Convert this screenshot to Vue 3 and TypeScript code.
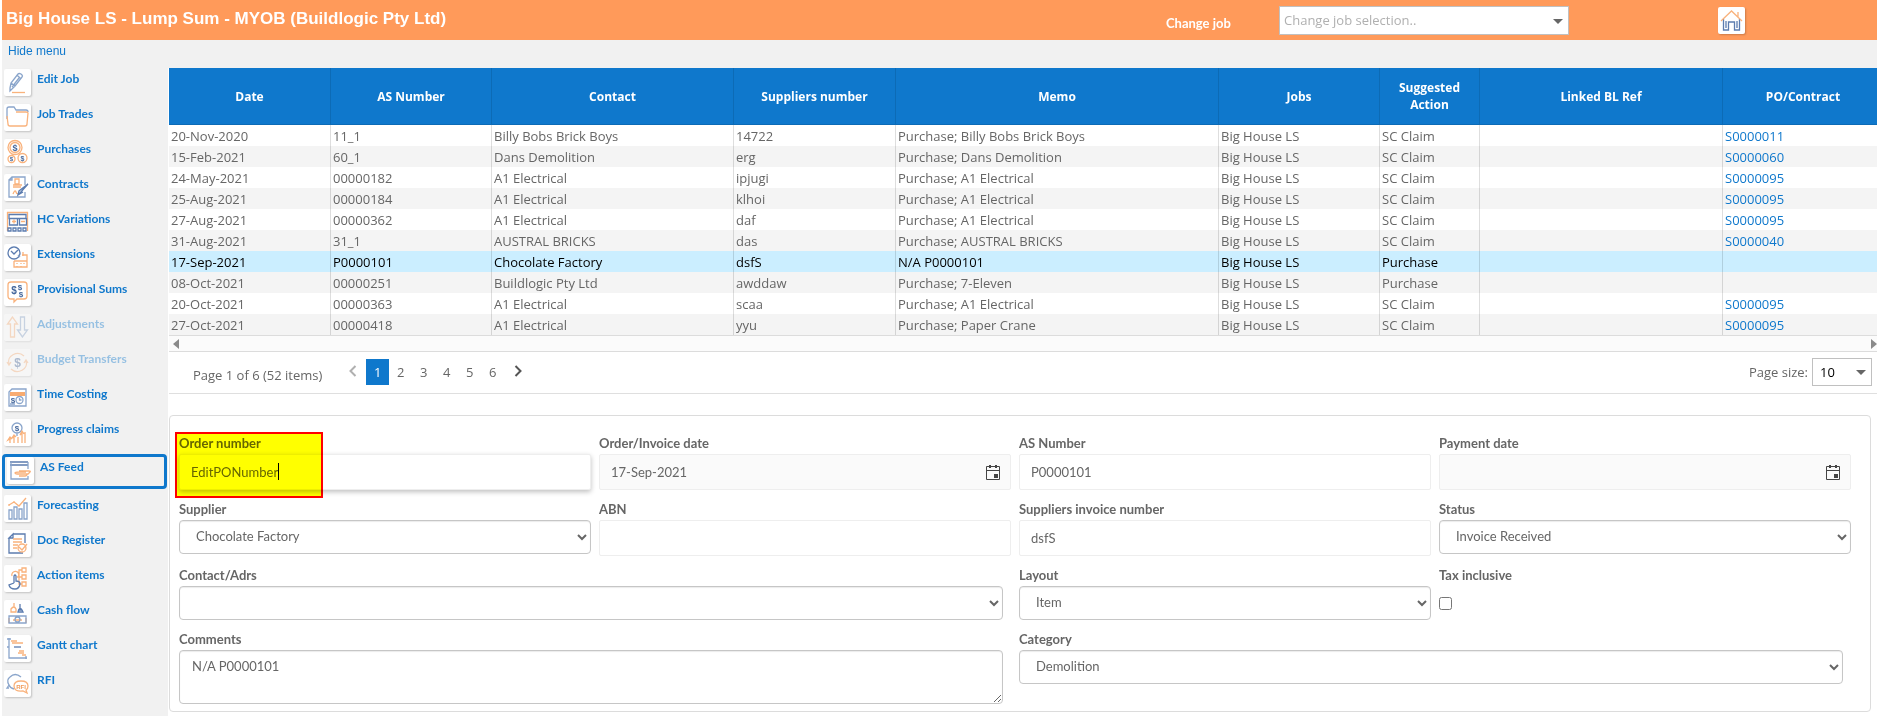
<script setup lang="ts">
import { ref } from 'vue'

type Shape = { t: 'b' | 'o' | 'd' | 'fb' | 'fo'; d: string }
type Glyph = { x: number; y: number; s: number; t: 'fb' | 'fo'; v: string }
interface MenuItem {
  label: string
  state?: 'active' | 'disabled'
  shapes: Shape[]
  glyphs?: Glyph[]
}

const menu: MenuItem[] = [
  {
    label: 'Edit Job',
    shapes: [
      { t: 'b', d: 'M6 19l1-5 7-9q1-1 3 0l1 1q1 1 0 2l-7 9-5 5zM7 14l4 3M13 6l4 4M8 18l7-9' },
      { t: 'o', d: 'M8 23.500h13' },
    ],
  },
  {
    label: 'Job Trades',
    shapes: [
      { t: 'b', d: 'M3 15V5q0-2 2-2h5l2 3h10q2 0 2 2' },
      { t: 'o', d: 'M3 12l1 8q0 2 2 2h15q2 0 2-2l1-11q0-1-2-1H12' },
    ],
  },
  {
    label: 'Purchases',
    shapes: [
      { t: 'o', d: 'M4 8.500a7 7 0 1 0 14 0a7 7 0 1 0-14 0M6 8.500a5 5 0 1 0 10 0a5 5 0 1 0-10 0M4 20a3.500 3.500 0 1 0 7 0a3.500 3.500 0 1 0-7 0M14 19a4.500 4.500 0 1 0 9 0a4.500 4.500 0 1 0-9 0' },
    ],
    glyphs: [
      { x: 11, y: 12, s: 9, t: 'fb', v: '$' },
      { x: 7.5, y: 22, s: 6, t: 'fb', v: '$' },
      { x: 18.5, y: 22, s: 7, t: 'fb', v: '$' },
    ],
  },
  {
    label: 'Contracts',
    shapes: [
      { t: 'b', d: 'M5 6l3-3h13v8M21 18v5H5V6h3V3' },
      { t: 'o', d: 'M11 5h4v5h-4zM9 11h9M9 13h8M9 20q2-5 3-2t3 1' },
      { t: 'd', d: 'M24 10l-8 9-2 2 1-4zM14 21l5-3' },
    ],
  },
  {
    label: 'HC Variations',
    shapes: [
      { t: 'o', d: 'M3.500 3v19M23.500 3v19M3 3.500h21M8 12.500h4M10 10.500v4M17 12.500h4' },
      { t: 'd', d: 'M5 5.500h17v4H5zM5.500 9v7h8V9M15.500 9v7h7V9M4 19h3v3H4zM9 19h3v3H9zM14 19h3v3h-3zM19 19h3v3h-3z' },
    ],
  },
  {
    label: 'Extensions',
    shapes: [
      { t: 'd', d: 'M4 9a6 6 0 1 0 12 0a6 6 0 1 0-12 0M7 7l3 3 4-4' },
      { t: 'b', d: 'M10 3v1M16 13l-2-2' },
      { t: 'o', d: 'M10 17v6h13V11h-5M10 17h13M13 19v1M17 19v1M20 19v1M13 22v1M17 22v1M19 8v4' },
    ],
  },
  {
    label: 'Provisional Sums',
    shapes: [{ t: 'o', d: 'M7 3h13q3 0 3 3v11q0 3-3 3h-7l-3 3v-3H7q-3 0-3-3V6q0-3 3-3z' }],
    glyphs: [
      { x: 10, y: 15, s: 10, t: 'fb', v: '$' },
      { x: 16, y: 11, s: 8, t: 'fb', v: '$' },
      { x: 17, y: 18, s: 8, t: 'fb', v: '$' },
    ],
  },
  {
    label: 'Adjustments',
    state: 'disabled',
    shapes: [
      { t: 'o', d: 'M8.500 3l-5 7h3v13h4V10h3z' },
      { t: 'b', d: 'M18.500 23l-5-7h3V3h4v13h3z' },
    ],
  },
  {
    label: 'Budget Transfers',
    state: 'disabled',
    shapes: [
      { t: 'o', d: 'M5 15a9 8 0 0 1 15-8M22 12a9 8 0 0 1-15 8M3 13l2 3 2-3M20 14l2-3 2 3' },
    ],
    glyphs: [{ x: 13.5, y: 18, s: 12, t: 'fb', v: '$' }],
  },
  {
    label: 'Time Costing',
    shapes: [
      { t: 'b', d: 'M5 8l3-3h14v17H5zM12 16a3.500 3.500 0 1 0 7 0a3.500 3.500 0 1 0-7 0M15.500 14v2h2M6 20h5' },
      { t: 'fo', d: 'M6 8h15v4H6z' },
    ],
    glyphs: [{ x: 9, y: 19, s: 8, t: 'fb', v: '$' }],
  },
  {
    label: 'Progress claims',
    shapes: [
      { t: 'b', d: 'M8 9a5 5 0 1 0 10 0a5 5 0 1 0-10 0M13 14v3' },
      { t: 'o', d: 'M6 24v-4l-2 1 2-3 2 2M10 24v-6l-2 1 2-3 2 2M14 24v-6M18 24V14l-2 2 2-4 2 3M21 24V13' },
    ],
    glyphs: [{ x: 13, y: 12, s: 8, t: 'fb', v: '$' }],
  },
  {
    label: 'AS Feed',
    state: 'active',
    shapes: [
      { t: 'd', d: 'M3 5h18M3 8h18' },
      { t: 'b', d: 'M4 5v17h17v-3M21 5v7' },
      { t: 'o', d: 'M12 14h10q2 0 1 1l-2 2h-9q-4 0-4-1t4-1h7M12 19h6q2 0 2-2' },
    ],
  },
  {
    label: 'Forecasting',
    shapes: [
      { t: 'b', d: 'M5 15h3v9H5zM10 12h3v12h-3zM15 14h3v10h-3zM20 8h3v16h-3z' },
      { t: 'o', d: 'M5 10l5-3 5 4 7-8M5 9v2M10 6v2M15 10v2' },
    ],
  },
  {
    label: 'Doc Register',
    shapes: [
      { t: 'd', d: 'M5 8l4-4v4zM9 4h12v9M5 8v15h14' },
      { t: 'o', d: 'M9 9h9M9 12h9M9 15h5M9 18h4M14 18a4 4 0 1 0 8 0a4 4 0 1 0-8 0M15 17l3 3 5-6' },
    ],
  },
  {
    label: 'Action items',
    shapes: [
      { t: 'o', d: 'M18 3h4v4h-4zM18 10h4v4h-4zM18 17h4v4h-4zM18 5h-3v14h3M13 12h5M8 11a3.500 3.500 0 1 1 6 1' },
      { t: 'd', d: 'M10 18v-7q1-2 2 0v5q4 0 4 3-1 5-5 5-5 0-6-4l5-2' },
    ],
  },
  {
    label: 'Cash flow',
    shapes: [
      { t: 'o', d: 'M10 3v4M7 9q3-4 5 0v3H7zM5 18v5M22 18v5M9 20h9' },
      { t: 'd', d: 'M16 4v4M14 12q2-7 5 0zM14 10h4' },
      { t: 'b', d: 'M5 16h17v7H5zM11 19.500a2.500 2.500 0 1 0 5 0a2.500 2.500 0 1 0-5 0' },
    ],
  },
  {
    label: 'Gantt chart',
    shapes: [
      { t: 'b', d: 'M5 3v20h18M3 4h4M3 12h2M22 21v3' },
      { t: 'o', d: 'M7 6h6M8 8h11M15 16h5M14 18h6M18 20h4' },
      { t: 'd', d: 'M10 12h7' },
    ],
  },
  {
    label: 'RFI',
    shapes: [
      { t: 'b', d: 'M5 18H3l2-3q-3-5 1-8 5-5 11 0M5 15q1 3 5 4' },
      { t: 'o', d: 'M10 16q0-5 7-5t7 5q0 3-2 4l1 3-4-2q-9 1-9-5z' },
    ],
    glyphs: [{ x: 17, y: 19, s: 6, t: 'fo', v: 'RFI' }],
  },
]

const columns = [
  { name: 'Date', cls: 'c162' },
  { name: 'AS Number', cls: 'c161' },
  { name: 'Contact', cls: 'c242' },
  { name: 'Suppliers number', cls: 'c162' },
  { name: 'Memo', cls: 'c323' },
  { name: 'Jobs', cls: 'c161' },
  { name: 'Suggested Action', cls: 'c100' },
  { name: 'Linked BL Ref', cls: 'c243' },
  { name: 'PO/Contract', cls: 'c161' },
]

const rows: string[][] = [
  ['20-Nov-2020', '11_1', 'Billy Bobs Brick Boys', '14722', 'Purchase; Billy Bobs Brick Boys', 'Big House LS', 'SC Claim', '', 'S0000011'],
  ['15-Feb-2021', '60_1', 'Dans Demolition', 'erg', 'Purchase; Dans Demolition', 'Big House LS', 'SC Claim', '', 'S0000060'],
  ['24-May-2021', '00000182', 'A1 Electrical', 'ipjugi', 'Purchase; A1 Electrical', 'Big House LS', 'SC Claim', '', 'S0000095'],
  ['25-Aug-2021', '00000184', 'A1 Electrical', 'klhoi', 'Purchase; A1 Electrical', 'Big House LS', 'SC Claim', '', 'S0000095'],
  ['27-Aug-2021', '00000362', 'A1 Electrical', 'daf', 'Purchase; A1 Electrical', 'Big House LS', 'SC Claim', '', 'S0000095'],
  ['31-Aug-2021', '31_1', 'AUSTRAL BRICKS', 'das', 'Purchase; AUSTRAL BRICKS', 'Big House LS', 'SC Claim', '', 'S0000040'],
  ['17-Sep-2021', 'P0000101', 'Chocolate Factory', 'dsfS', 'N/A P0000101', 'Big House LS', 'Purchase', '', ''],
  ['08-Oct-2021', '00000251', 'Buildlogic Pty Ltd', 'awddaw', 'Purchase; 7-Eleven', 'Big House LS', 'Purchase', '', ''],
  ['20-Oct-2021', '00000363', 'A1 Electrical', 'scaa', 'Purchase; A1 Electrical', 'Big House LS', 'SC Claim', '', 'S0000095'],
  ['27-Oct-2021', '00000418', 'A1 Electrical', 'yyu', 'Purchase; Paper Crane', 'Big House LS', 'SC Claim', '', 'S0000095'],
]

const selected = ref(6)
const page = ref(1)
const orderNumber = ref('EditPONumber')
const orderDate = ref('17-Sep-2021')
const asNumber = ref('P0000101')
const paymentDate = ref('')
const abn = ref('')
const invoiceNumber = ref('dsfS')
const comments = ref('N/A P0000101')
const taxInclusive = ref(false)
</script>

<template>
  <div class="page">
    <header class="topbar">
      <h1>Big House LS - Lump Sum - MYOB (Buildlogic Pty Ltd)</h1>
      <label class="change" for="job">Change job</label>
      <div class="combo">
        <input id="job" type="text" placeholder="Change job selection.." />
        <button type="button" aria-label="Open job list"><span class="tri-down"></span></button>
      </div>
      <a class="home" href="#" aria-label="Home">
        <svg viewBox="0 0 27 27" class="ico">
          <path class="d" d="M5.500 12v11h5v-8h6v8h5V12M8 14v7M19 14v7" />
          <path class="o" d="M3 14L13.500 4 24 14M20 5v5" />
        </svg>
      </a>
    </header>

    <div class="body">
      <nav class="side">
        <a class="hide" href="#">Hide menu</a>
        <a v-for="m in menu" :key="m.label" href="#" class="item" :class="m.state">
          <span class="card">
            <svg viewBox="0 0 27 27" class="ico">
              <path v-for="(s, i) in m.shapes" :key="i" :class="s.t" :d="s.d" />
              <text v-for="(g, i) in m.glyphs" :key="'g' + i" :class="g.t" :x="g.x" :y="g.y" :font-size="g.s">{{ g.v }}</text>
            </svg>
          </span>
          <span class="name">{{ m.label }}</span>
        </a>
      </nav>

      <main class="main">
        <section class="grid">
          <div class="scroll">
            <table>
              <colgroup>
                <col v-for="c in columns" :key="c.name" :class="c.cls" />
              </colgroup>
              <thead>
                <tr>
                  <th v-for="c in columns" :key="c.name" scope="col">{{ c.name }}</th>
                </tr>
              </thead>
              <tbody>
                <tr v-for="(r, i) in rows" :key="i" :class="{ alt: i % 2 === 1, sel: i === selected }" @click="selected = i">
                  <td v-for="(v, j) in r" :key="j">
                    <a v-if="j === 8 && v" href="#">{{ v }}</a>
                    <template v-else>{{ v }}</template>
                  </td>
                </tr>
              </tbody>
            </table>
          </div>
          <div class="hbar">
            <button type="button" aria-label="Scroll left"><span class="tri-left"></span></button>
            <button type="button" aria-label="Scroll right"><span class="tri-right"></span></button>
          </div>
          <div class="pager">
            <span class="summary">Page 1 of 6 (52 items)</span>
            <div class="pages">
              <button type="button" class="arrow dim" aria-label="Previous page">
                <svg width="8" height="12" viewBox="0 0 8 12"><path d="M6.500 1l-5 5 5 5" /></svg>
              </button>
              <button v-for="n in 6" :key="n" type="button" :class="{ on: n === page }" @click="page = n">{{ n }}</button>
              <button type="button" class="arrow" aria-label="Next page">
                <svg width="8" height="12" viewBox="0 0 8 12"><path d="M1.500 1l5 5-5 5" /></svg>
              </button>
            </div>
            <label for="size">Page size:</label>
            <div class="size">
              <select id="size"><option>10</option></select>
              <span class="tri-down"></span>
            </div>
          </div>
        </section>

        <form class="form" @submit.prevent>
          <div class="field">
            <label for="on">Order number</label>
            <input id="on" v-model="orderNumber" type="text" class="focus" />
            <span class="caret"></span>
            <span class="mark"></span>
          </div>
          <div class="field">
            <label for="od">Order/Invoice date</label>
            <div class="date">
              <input id="od" v-model="orderDate" type="text" />
              <button type="button" aria-label="Pick order date">
                <svg width="16" height="17" viewBox="0 0 16 17"><path class="ln" d="M1.500 2.500h13v13h-13zM1 6.500h14" /><path d="M4 1h2v3H4zM10 1h2v3h-2zM9 10h4v4H9z" /></svg>
              </button>
            </div>
          </div>
          <div class="field">
            <label for="an">AS Number</label>
            <input id="an" v-model="asNumber" type="text" />
          </div>
          <div class="field">
            <label for="pd">Payment date</label>
            <div class="date">
              <input id="pd" v-model="paymentDate" type="text" />
              <button type="button" aria-label="Pick payment date">
                <svg width="16" height="17" viewBox="0 0 16 17"><path class="ln" d="M1.500 2.500h13v13h-13zM1 6.500h14" /><path d="M4 1h2v3H4zM10 1h2v3h-2zM9 10h4v4H9z" /></svg>
              </button>
            </div>
          </div>

          <div class="field">
            <label for="su">Supplier</label>
            <select id="su"><option>Chocolate Factory</option></select>
          </div>
          <div class="field">
            <label for="ab">ABN</label>
            <input id="ab" v-model="abn" type="text" />
          </div>
          <div class="field">
            <label for="si">Suppliers invoice number</label>
            <input id="si" v-model="invoiceNumber" type="text" />
          </div>
          <div class="field">
            <label for="st">Status</label>
            <select id="st"><option>Invoice Received</option></select>
          </div>

          <div class="field wide">
            <label for="ca">Contact/Adrs</label>
            <select id="ca"><option></option></select>
          </div>
          <div class="field">
            <label for="la">Layout</label>
            <select id="la"><option>Item</option></select>
          </div>
          <div class="field">
            <label for="ti">Tax inclusive</label>
            <input id="ti" v-model="taxInclusive" type="checkbox" />
          </div>

          <div class="field wide">
            <label for="co">Comments</label>
            <textarea id="co" v-model="comments"></textarea>
          </div>
          <div class="field wide">
            <label for="cg">Category</label>
            <select id="cg"><option>Demolition</option></select>
          </div>
        </form>
      </main>
    </div>
  </div>
</template>

<style>
body {
  margin: 0;
  background: #fff;
}
</style>

<style scoped>
* {
  box-sizing: border-box;
}
a {
  text-decoration: none;
}
button {
  border: 0;
  padding: 0;
  background: none;
  font: inherit;
  color: inherit;
  cursor: pointer;
}
.page {
  display: flex;
  flex-direction: column;
  min-height: 100vh;
  padding-left: 2px;
  overflow: hidden;
  font-family: 'Open Sans', 'Noto Sans', sans-serif;
  font-size: 13px;
  color: #666;
}
.topbar {
  display: grid;
  grid-template-columns: 1164fr 113fr 439fr 159fr;
  align-items: center;
  height: 40px;
  background: #ff9a5a;
  color: #fff;
}
h1 {
  margin: 0 0 3px 4px;
  font: bold 17px/20px 'Liberation Sans', Arial, sans-serif;
}
.change {
  padding-top: 6px;
  font: bold 13px/18px Lato, Calibri, sans-serif;
}
.combo {
  display: flex;
  width: 66%;
  height: 29px;
  border: 1px solid #c0c0c0;
  background: #fff;
}
.combo input {
  flex: 1;
  min-width: 0;
  padding: 0 4px;
  border: 0;
  outline: 0;
  font: 13px 'Open Sans', 'Noto Sans', sans-serif;
}
.combo input::placeholder {
  color: #b0b0b0;
}
.combo button {
  width: 20px;
}
.tri-down {
  display: inline-block;
  border: 5px solid transparent;
  border-top-color: #666;
  border-bottom: 0;
  vertical-align: middle;
}
.home,
.card {
  flex: none;
  display: block;
  width: 27px;
  height: 27px;
  border-radius: 2px;
  background: #fff;
  box-shadow: 1px 1px 2px rgba(0, 0, 0, 0.2);
}
.ico {
  display: block;
  width: 27px;
  height: 27px;
}
.ico path {
  fill: none;
  stroke-width: 1.3;
}
.ico .b {
  stroke: #8aa5cb;
}
.ico .d {
  stroke: #5c7caf;
}
.ico .o {
  stroke: #f9b27c;
}
.ico path.fo {
  fill: #f8ab70;
}
.ico text {
  font-family: 'Liberation Sans', Arial, sans-serif;
  font-weight: bold;
  text-anchor: middle;
}
.ico text.fb {
  fill: #46689c;
}
.ico text.fo {
  fill: #f09a58;
}
.body {
  flex: 1;
  display: flex;
  background: #f1f1f1;
}
.side {
  flex: none;
  display: flex;
  flex-direction: column;
  width: 166px;
}
.hide {
  margin: 3px 0 10px 6px;
  font: 12px/16px 'Liberation Sans', Arial, sans-serif;
  color: #0f78cc;
}
.item {
  display: flex;
  gap: 6px;
  margin-bottom: 6px;
  padding: 0 2px 2px;
  color: #0f78cc;
}
.item.disabled {
  opacity: 0.4;
}
.item.active {
  margin-right: 1px;
  border: 3px solid #0f78cc;
  border-radius: 4px;
}
.name {
  font: bold 12px/20px Lato, Calibri, sans-serif;
}
.main {
  flex: 1;
  min-width: 0;
  margin-top: 28px;
  background: #fff;
}
.grid {
  margin-left: 1px;
  border-bottom: 1px solid #dfdfdf;
}
.scroll {
  overflow: hidden;
}
table {
  min-width: 1715px;
  width: 100%;
  table-layout: fixed;
  border-collapse: separate;
  border-spacing: 0;
}
.c161 {
  width: 161px;
}
.c242 {
  width: 242px;
}
.c243 {
  width: 243px;
}
.c162 {
  width: 162px;
}
.c323 {
  width: 323px;
}
.c100 {
  width: 100px;
}
th {
  height: 57px;
  padding: 0 8px;
  border-right: 1px solid #0c6bb6;
  border-bottom: 1px solid #0c6bb6;
  background: #0f78cc;
  color: #fff;
  font-weight: bold;
  font-size: 12px;
  line-height: 17px;
}
td {
  height: 21px;
  padding: 0 2px;
  border-right: 1px solid rgba(0, 0, 0, 0.13);
  line-height: 20px;
  white-space: nowrap;
}
td a {
  color: #0f78cc;
}
.alt td {
  background: #f4f4f4;
}
.sel td {
  background: #cbeeff;
  color: #000;
}
.hbar {
  display: flex;
  justify-content: space-between;
  height: 17px;
  border: solid #dcdcdc;
  border-width: 1px 0;
  background: #fbfbfb;
}
.hbar button {
  display: flex;
  align-items: center;
  padding-left: 4px;
}
.tri-left,
.tri-right {
  border: 5px solid transparent;
}
.tri-left {
  border-left: 0;
  border-right: 6px solid #8a8a8a;
}
.tri-right {
  border-right: 0;
  border-left: 6px solid #8a8a8a;
}
.pager {
  display: flex;
  align-items: center;
  height: 41px;
  padding: 0 5px 1px 24px;
}
.summary {
  padding-top: 6px;
}
.pages {
  display: flex;
  flex: 1;
  margin-left: 17px;
}
.pages button {
  width: 23px;
  height: 26px;
}
.pages .on {
  background: #0f78cc;
  color: #fff;
}
.pages .arrow {
  width: 27px;
}
.pages path {
  fill: none;
  stroke: #555;
  stroke-width: 2;
}
.pages .dim path {
  stroke: #b0b0b0;
}
.size {
  position: relative;
  width: 60px;
  margin-left: 4px;
}
.size select {
  appearance: none;
  display: block;
  width: 100%;
  height: 28px;
  padding: 0 7px;
  border: 1px solid #c0c0c0;
  border-radius: 0;
  background: #fff;
  font: 13px 'Open Sans', 'Noto Sans', sans-serif;
  color: #000;
}
.size .tri-down {
  position: absolute;
  right: 6px;
  top: 12px;
  pointer-events: none;
}
.form {
  display: grid;
  grid-template-columns: repeat(4, minmax(0, 1fr));
  gap: 9px 8px;
  margin: 21px 6px 3px 1px;
  padding: 17px 19px 7px 9px;
  border: 1px solid #dcdcdc;
  border-radius: 4px;
  font-family: Lato, Calibri, sans-serif;
}
.field {
  position: relative;
  display: flex;
  flex-direction: column;
}
.wide {
  grid-column: span 2;
  padding-right: 8px;
}
.field label {
  margin-bottom: 1px;
  font-weight: bold;
  font-size: 13px;
  line-height: 20px;
}
.form input[type='text'],
.form select,
.form textarea {
  width: 100%;
  height: 36px;
  padding: 0 11px;
  border: 1px solid #eee;
  border-radius: 2px;
  outline: 0;
  background: #fff;
  font: 13px Lato, Calibri, sans-serif;
  color: #666;
}
.form select,
.form textarea {
  height: 34px;
  padding: 0 0 2px 12px;
  border: 1px solid #c6c6c6;
  border-radius: 4px;
  box-shadow: inset 0 1px 1px rgba(0, 0, 0, 0.08);
}
.form textarea {
  height: 54px;
  padding: 5px 12px;
  line-height: 20px;
}
.form .focus {
  box-shadow: 0 2px 5px rgba(0, 0, 0, 0.25);
}
.form .date {
  display: flex;
  border: 1px solid #eee;
  border-radius: 2px;
  background: #fafafa;
}
.form .date input {
  flex: 1;
  min-width: 0;
  height: 34px;
  border: 0;
  background: none;
}
.date button {
  display: flex;
  align-items: center;
  justify-content: center;
  width: 35px;
}
.date path {
  fill: #444;
}
.date .ln {
  fill: none;
  stroke: #444;
}
.form input[type='checkbox'] {
  width: 13px;
  height: 13px;
  margin: 11px 0 0;
}
.mark {
  position: absolute;
  left: -4px;
  top: -1px;
  width: 148px;
  height: 66px;
  border: 2px solid #f00;
  background: #ff0;
  mix-blend-mode: multiply;
  pointer-events: none;
}
.caret {
  position: absolute;
  left: 99px;
  top: 30px;
  width: 1px;
  height: 17px;
  background: #000;
}
</style>
